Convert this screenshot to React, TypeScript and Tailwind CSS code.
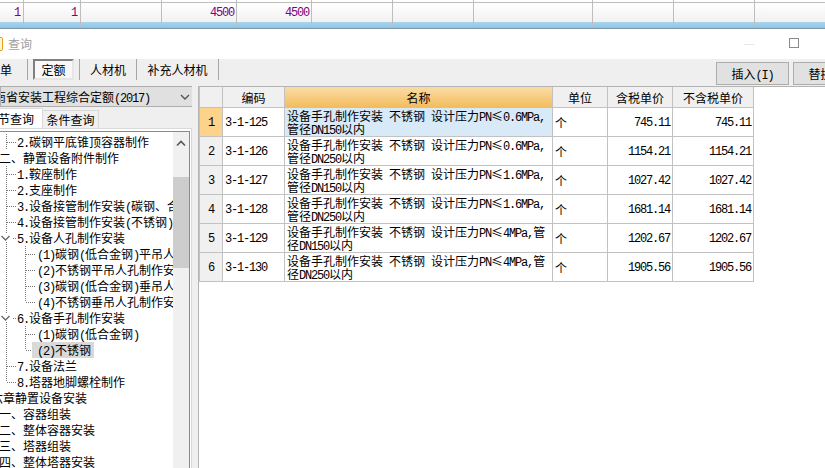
const topCols = [
  { w: "w-[24px]", v: "1", pr: "pr-[3px]" },
  { w: "w-[57px]", v: "1", pr: "pr-[3px]" },
  { w: "w-[81px]", v: "", pr: "" },
  { w: "w-[75px]", v: "4500", pr: "pr-[2px]" },
  { w: "w-[75px]", v: "4500", pr: "pr-[2px]" },
  { w: "w-[81px]", v: "", pr: "" },
  { w: "w-[81px]", v: "", pr: "" },
  { w: "w-[119px]", v: "", pr: "" },
  { w: "w-[81px]", v: "", pr: "" },
  { w: "w-[81px]", v: "", pr: "" },
];

const rows = [
  { code: "3-1-125", a: "设备手孔制作安装 不锈钢 设计压力PN≤0.6MPa,", b: "管径DN150以内", tax: "745.11", net: "745.11" },
  { code: "3-1-126", a: "设备手孔制作安装 不锈钢 设计压力PN≤0.6MPa,", b: "管径DN250以内", tax: "1154.21", net: "1154.21" },
  { code: "3-1-127", a: "设备手孔制作安装 不锈钢 设计压力PN≤1.6MPa,", b: "管径DN150以内", tax: "1027.42", net: "1027.42" },
  { code: "3-1-128", a: "设备手孔制作安装 不锈钢 设计压力PN≤1.6MPa,", b: "管径DN250以内", tax: "1681.14", net: "1681.14" },
  { code: "3-1-129", a: "设备手孔制作安装 不锈钢 设计压力PN≤4MPa,管", b: "径DN150以内", tax: "1202.67", net: "1202.67" },
  { code: "3-1-130", a: "设备手孔制作安装 不锈钢 设计压力PN≤4MPa,管", b: "径DN250以内", tax: "1905.56", net: "1905.56" },
];

type TreeItem = { text: string; level: number; open?: boolean; last?: boolean; selected?: boolean };

const tree: TreeItem[] = [
  { text: "2.碳钢平底锥顶容器制作", level: 2 },
  { text: "二、静置设备附件制作", level: 1 },
  { text: "1.鞍座制作", level: 2 },
  { text: "2.支座制作", level: 2 },
  { text: "3.设备接管制作安装(碳钢、合金钢)", level: 2 },
  { text: "4.设备接管制作安装(不锈钢)", level: 2 },
  { text: "5.设备人孔制作安装", level: 2, open: true },
  { text: "(1)碳钢(低合金钢)平吊人孔制作安装", level: 3 },
  { text: "(2)不锈钢平吊人孔制作安装", level: 3 },
  { text: "(3)碳钢(低合金钢)垂吊人孔制作安装", level: 3 },
  { text: "(4)不锈钢垂吊人孔制作安装", level: 3, last: true },
  { text: "6.设备手孔制作安装", level: 2, open: true },
  { text: "(1)碳钢(低合金钢)", level: 3 },
  { text: "(2)不锈钢", level: 3, last: true, selected: true },
  { text: "7.设备法兰", level: 2 },
  { text: "8.塔器地脚螺栓制作", level: 2, last: true },
  { text: "第六章静置设备安装", level: 0 },
  { text: "一、容器组装", level: 1 },
  { text: "二、整体容器安装", level: 1 },
  { text: "三、塔器组装", level: 1 },
  { text: "四、整体塔器安装", level: 1 },
];

const num = "font-['Liberation_Mono'] text-[12px] tracking-[-1.2px]";

// half-width latin next to full-width CJK, like the bitmap font in the app
function Mix({ text }: { text: string }) {
  return (
    <>
      {text.split(/([\x20-\x7e]+)/).map((part, i) =>
        i % 2 ? (
          <span key={i} className={`${num} whitespace-pre leading-none`}>
            {part}
          </span>
        ) : (
          part
        ),
      )}
    </>
  );
}

function Connector({ item }: { item: TreeItem }) {
  const dot = { stroke: "#777", strokeDasharray: "1 1", strokeWidth: 1 };
  if (item.level === 2) {
    return (
      <svg width="17" height="16" className="shrink-0">
        {!item.open && <line x1="6.5" y1="0" x2="6.5" y2={item.last ? 8 : 16} {...dot} />}
        {item.open ? (
          <>
            <line x1="6.5" y1="0" x2="6.5" y2="4" {...dot} />
            <line x1="6.5" y1="12" x2="6.5" y2="16" {...dot} />
            <line x1="13" y1="8.5" x2="17" y2="8.5" {...dot} />
            <path d="M1.5 6 L5.5 10 L9.5 6" fill="none" stroke="#666" strokeWidth="1.3" />
          </>
        ) : (
          <line x1="7" y1="8.5" x2="16" y2="8.5" {...dot} />
        )}
      </svg>
    );
  }
  return (
    <svg width="37" height="16" className="shrink-0">
      <line x1="6.5" y1="0" x2="6.5" y2="16" {...dot} />
      <line x1="25.5" y1="0" x2="25.5" y2={item.last ? 8 : 16} {...dot} />
      <line x1="26" y1="8.5" x2="35" y2="8.5" {...dot} />
    </svg>
  );
}

function TreeRow({ item }: { item: TreeItem }) {
  const offset = item.level === 0 ? "-ml-[21px]" : item.level === 1 ? "-ml-[1px]" : "";
  return (
    <div className={`flex h-4 items-center whitespace-nowrap ${offset}`}>
      {item.level >= 2 && <Connector item={item} />}
      <span className={item.selected ? "-ml-[5px] bg-[#d9d9d9] pl-[5px] pr-[3px] leading-4" : "leading-4"}>
        <Mix text={item.text} />
      </span>
    </div>
  );
}

const gridCols = "grid grid-cols-[23px_62px_268px_55px_65px_81px]";
const cell = "border-r border-b border-[#c2c2c2] flex items-center";

export default function App() {
  return (
    <div className="flex h-[468px] w-[825px] flex-col overflow-hidden bg-white font-['Noto_Sans_CJK_SC','Liberation_Sans',sans-serif] text-[12px] text-black">
      {/* table strip from the window behind */}
      <div className="flex h-[29px] shrink-0 border-b border-[#7f98aa]">
        {topCols.map((c, i) => (
          <div key={i} className={`${c.w} flex shrink-0 flex-col border-r border-[#bdbdbd]`}>
            <div className="h-[2px]" />
            <div className={`flex h-[20px] items-center justify-end border-t border-[#bdbdbd] bg-gradient-to-b from-white to-[#f1f1f1] pt-px text-[#800080] ${c.pr} ${num}`}>
              {c.v}
            </div>
            <div className="flex-1 bg-gradient-to-b from-[#a9d4ee] to-[#8fc4e4]" />
          </div>
        ))}
        <div className="flex flex-1 flex-col">
          <div className="h-[2px]" />
          <div className="h-[20px] border-t border-[#bdbdbd] bg-gradient-to-b from-white to-[#f1f1f1]" />
          <div className="flex-1 bg-gradient-to-b from-[#a9d4ee] to-[#8fc4e4]" />
        </div>
      </div>

      {/* title bar */}
      <div className="flex h-[30px] shrink-0 items-center">
        <div className="-ml-[8px] h-[14px] w-[11px] rounded-[2px] border border-[#e8a020] bg-[#fff4d0]" />
        <span className="ml-[5px] text-[#a0a0a0]">查询</span>
        <div className="ml-auto h-px w-[10px] bg-[#e6e6e6]" />
        <div className="-mt-[2px] ml-[35px] mr-[26px] h-[10px] w-[10px] border border-[#8a8a8a]" />
      </div>

      <div className="flex min-h-0 flex-1 flex-col bg-[#efefef]">
        {/* toolbar */}
        <div className="flex h-[27px] shrink-0 items-start">
          <div className="flex h-[21px] w-[28px] shrink-0 items-center border-r border-[#a6a6a6]">单</div>
          <div className="ml-[5px] flex h-[21px] w-[41px] shrink-0 items-center justify-center border-2 border-t-[#808080] border-l-[#808080] border-r-[#e6e6e6] border-b-[#e6e6e6] bg-[#f8f8f8]">
            定额
          </div>
          <div className="ml-[5px] flex h-[21px] w-[58px] shrink-0 items-center justify-center border-x border-[#a6a6a6]">
            人材机
          </div>
          <div className="flex h-[21px] w-[82px] shrink-0 items-center justify-center border-r border-[#a6a6a6]">
            补充人材机
          </div>
          <button className="ml-[497px] mt-[3px] flex h-[23px] w-[73px] shrink-0 items-center justify-center border border-[#adadad] bg-[#e1e1e1]">
            <span className="whitespace-nowrap">
              <Mix text="插入(I)" />
            </span>
          </button>
          <button className="ml-[4px] mt-[3px] flex h-[23px] w-[73px] shrink-0 items-center justify-center border border-[#adadad] bg-[#e1e1e1]">
            <span className="whitespace-nowrap">
              <Mix text="替换(R)" />
            </span>
          </button>
        </div>

        <div className="flex min-h-0 flex-1">
          {/* left panel */}
          <div className="flex w-[192px] shrink-0 flex-col overflow-hidden">
            <div className="flex h-[21px] w-[195px] shrink-0 items-center justify-between overflow-hidden border border-[#adadad] bg-[#e0e0e0] pr-[3px]">
              <span className="-ml-[7px] whitespace-nowrap">
                <Mix text="南省安装工程综合定额(2017)" />
              </span>
              <svg width="12" height="8" viewBox="0 0 12 8">
                <path d="M2 2 L6 6 L10 2" fill="none" stroke="#555" strokeWidth="1.4" />
              </svg>
            </div>
            <div className="mt-px flex h-[20px] shrink-0 items-end">
              <div className="-ml-[14px] flex h-[20px] w-[57px] shrink-0 items-center justify-end whitespace-nowrap border-x border-t border-[#d9d9d9] bg-white pr-[8px]">
                章节查询
              </div>
              <div className="flex h-[18px] w-[56px] shrink-0 items-center justify-center whitespace-nowrap border-r border-t border-[#d9d9d9] bg-[#f0f0f0]">
                条件查询
              </div>
            </div>
            <div className="min-h-0 flex-1 border-t border-r border-[#d9d9d9] bg-white pt-[2px] pr-px">
              <div className="flex h-full border-t border-r border-[#8a8a8a]">
                <div className="w-[173px] shrink-0 overflow-hidden pt-[2px]">
                  {tree.map((item, i) => (
                    <TreeRow key={i} item={item} />
                  ))}
                </div>
                <div className="flex w-[16px] shrink-0 flex-col bg-[#f0f0f0]">
                  <div className="flex h-[45px] items-start justify-center pt-[8px]">
                    <svg width="10" height="7" viewBox="0 0 10 7">
                      <path d="M1 5.5 L5 1.5 L9 5.5" fill="none" stroke="#555" strokeWidth="1.6" />
                    </svg>
                  </div>
                  <div className="h-[91px] bg-[#cdcdcd]" />
                </div>
              </div>
            </div>
          </div>

          {/* results grid */}
          <div className="ml-[6px] min-w-0 flex-1 border-t border-l border-[#b4b4b4] bg-white">
            <div className="w-[555px] border-l border-[#c2c2c2]">
              <div className={`${gridCols} h-[21px]`}>
                <div className={`${cell} bg-[#f0f0f0]`} />
                <div className={`${cell} justify-center bg-[#f0f0f0] pt-px`}>编码</div>
                <div className={`${cell} justify-center bg-gradient-to-b from-[#fbdca5] to-[#f3bd5d] pt-px`}>名称</div>
                <div className={`${cell} justify-center bg-[#f0f0f0] pt-px`}>单位</div>
                <div className={`${cell} justify-center bg-[#f0f0f0] pt-px`}>含税单价</div>
                <div className={`${cell} justify-center bg-[#f0f0f0] pt-px`}>不含税单价</div>
              </div>
              {rows.map((r, i) => (
                <div key={r.code} className={`${gridCols} h-[29px]`}>
                  <div className={`${cell} justify-center pt-[2px] ${num} ${i === 0 ? "bg-[#fdd28a]" : "bg-[#f0f0f0]"}`}>{i + 1}</div>
                  <div className={`${cell} pl-[2px] pt-[2px] ${num}`}>{r.code}</div>
                  <div className={`${cell} pl-[2px] ${i === 0 ? "bg-[#d8e9f8]" : ""}`}>
                    <div className="whitespace-nowrap leading-[13px]">
                      <div className="h-[13px]">
                        <Mix text={r.a} />
                      </div>
                      <div className="h-[13px]">
                        <Mix text={r.b} />
                      </div>
                    </div>
                  </div>
                  <div className={`${cell} pl-[2px] pt-[2px]`}>个</div>
                  <div className={`${cell} justify-end pr-[2px] pt-[2px] ${num}`}>{r.tax}</div>
                  <div className={`${cell} justify-end pr-[2px] pt-[2px] ${num}`}>{r.net}</div>
                </div>
              ))}
            </div>
          </div>
        </div>
      </div>
    </div>
  );
}
